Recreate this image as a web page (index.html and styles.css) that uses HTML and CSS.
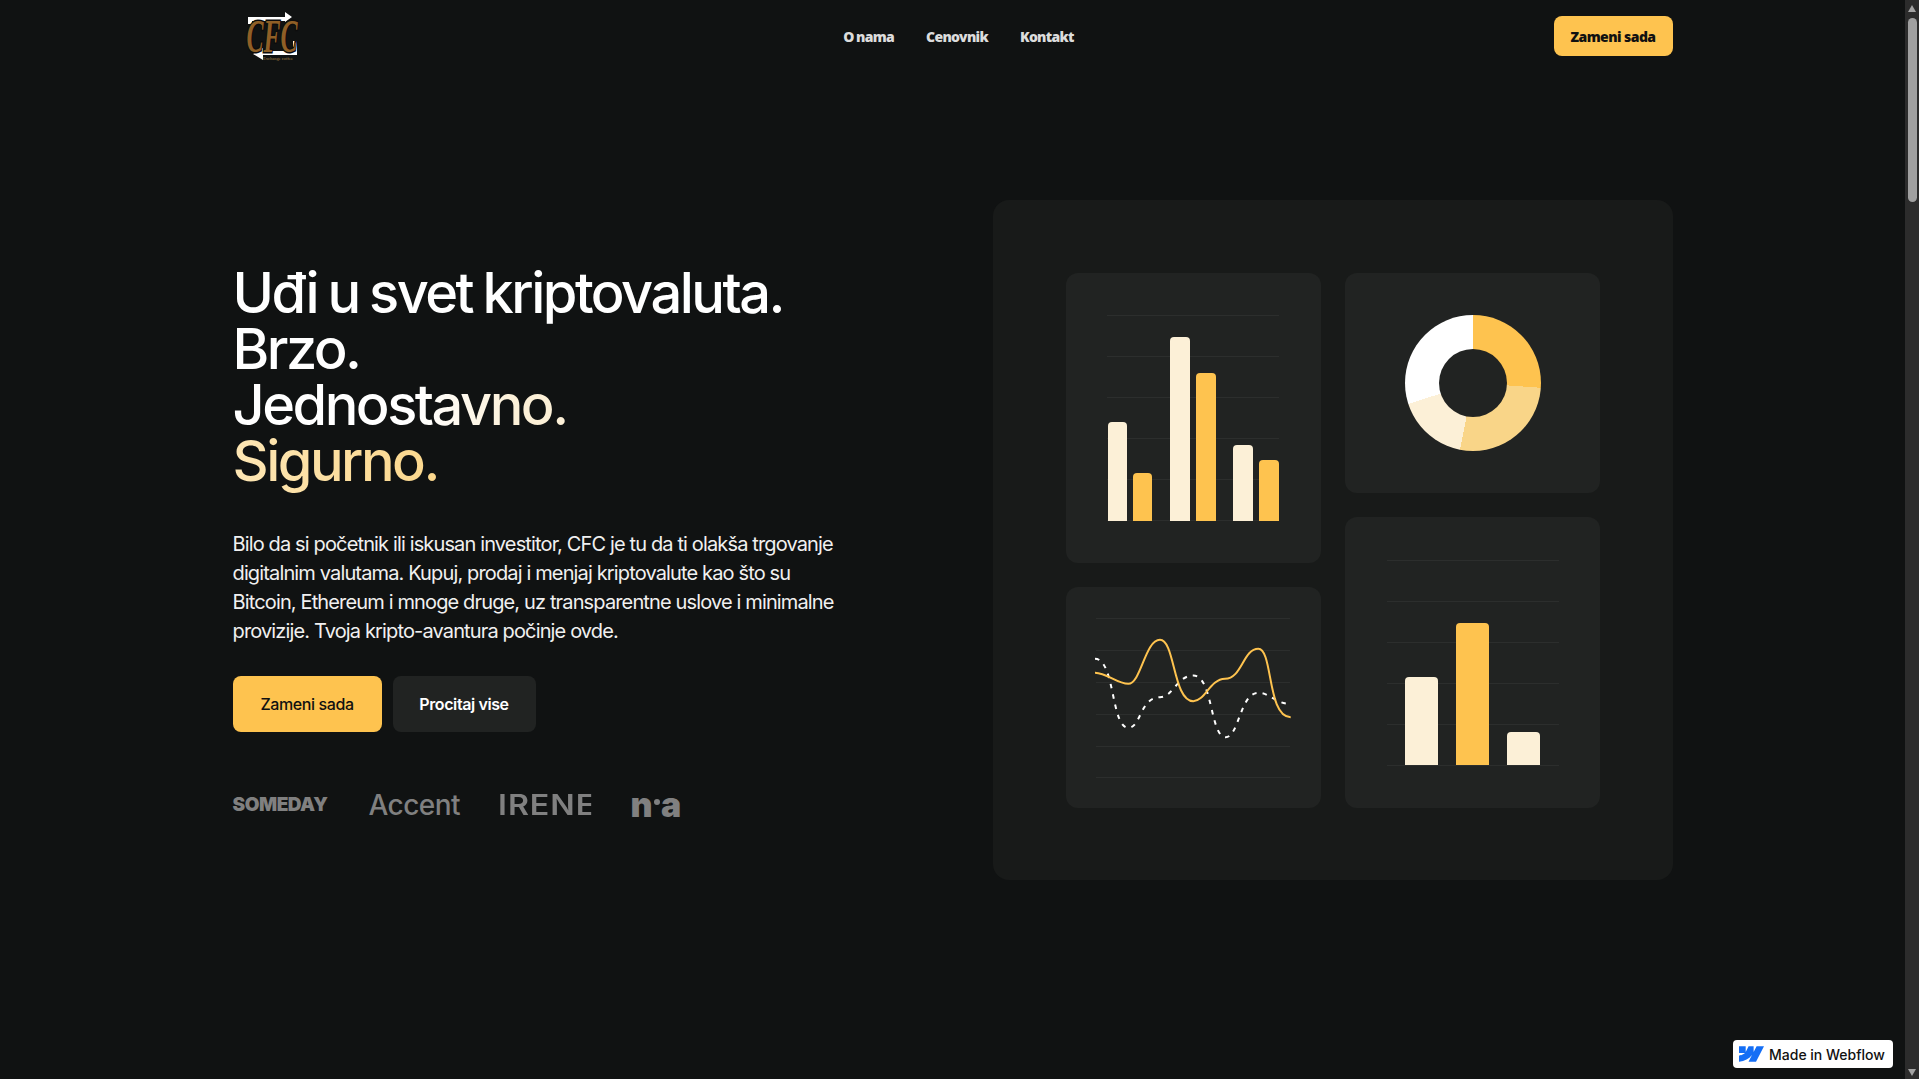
FILE: index.html
```html
<!DOCTYPE html>
<html lang="en">
<head>
  <meta charset="UTF-8">
  <meta name="viewport" content="width=device-width, initial-scale=1.0">
  <title>CFC - Zamena kriptovaluta</title>
  <link rel="stylesheet" href="styles.css">
</head>
<body>
  <div class="site">
    <header class="nav">
      <a class="brand" href="#">
        <svg class="brand-mark" viewBox="0 0 56 52" width="56" height="52">
          <polygon points="2,7 39,7 39,2 46,7 39,12 39,11 6,11 6,14 2,14" fill="#fff"/>
          <polygon points="51,31 51,45 17,45 17,50 7,44 17,38 17,41 47,41 47,31" fill="#fff"/>
          <text class="brand-text" x="26" y="42" text-anchor="middle" textLength="51" lengthAdjust="spacingAndGlyphs">CFC</text>
          <text class="brand-small" x="32" y="50" text-anchor="middle">Exchange coffee</text>
        </svg>
      </a>
      <nav class="nav-links">
        <a href="#">O nama</a>
        <a href="#">Cenovnik</a>
        <a href="#">Kontakt</a>
      </nav>
      <a class="nav-btn" href="#">Zameni sada</a>
    </header>

    <section class="hero">
      <div class="hero-text">
        <h1>Uđi u svet kriptovaluta.<br>Brzo.<br><span class="fade">Jednostavno.</span><br><span class="gold">Sigurno.</span></h1>
        <p>Bilo da si početnik ili iskusan investitor, CFC je tu da ti olakša trgovanje digitalnim valutama. Kupuj, prodaj i menjaj kriptovalute kao što su Bitcoin, Ethereum i mnoge druge, uz transparentne uslove i minimalne provizije. Tvoja kripto-avantura počinje ovde.</p>
        <div class="actions">
          <a class="btn btn-yellow" href="#">Zameni sada</a>
          <a class="btn btn-dark" href="#">Procitaj vise</a>
        </div>
        <div class="logos">
          <span class="logo-someday">SOMEDAY</span>
          <span class="logo-accent">Accent</span>
          <span class="logo-irene">IRENE</span>
          <span class="logo-na">n<i></i>a</span>
        </div>
      </div>

      <div class="panel">
        <div class="panel-col panel-col-left">
          <div class="card card-h290">
            <svg viewBox="0 0 172 206" width="172" height="206">
              <g class="grid">
                <path d="M0 .5H172M0 41.5H172M0 82.5H172M0 123.5H172M0 164.5H172M0 205.5H172"/>
              </g>
              <path class="cream" d="M1 206V111a4 4 0 0 1 4-4H16a4 4 0 0 1 4 4V206Z"/>
              <path class="yellow" d="M26 206V162a4 4 0 0 1 4-4H41a4 4 0 0 1 4 4V206Z"/>
              <path class="cream" d="M63 206V26a4 4 0 0 1 4-4H79a4 4 0 0 1 4 4V206Z"/>
              <path class="yellow" d="M89 206V62a4 4 0 0 1 4-4H105a4 4 0 0 1 4 4V206Z"/>
              <path class="cream" d="M126 206V134a4 4 0 0 1 4-4H142a4 4 0 0 1 4 4V206Z"/>
              <path class="yellow" d="M152 206V149a4 4 0 0 1 4-4H168a4 4 0 0 1 4 4V206Z"/>
            </svg>
          </div>
          <div class="card card-fill">
            <svg viewBox="0 0 196 160" width="196" height="160">
              <g class="grid">
                <path d="M1 .5H195M1 32.5H195M1 64.5H195M1 96.5H195M1 128.5H195M1 159.5H195"/>
              </g>
              <path class="line-white" d="M0 40.8C20 40.8 16 109.8 33.3 109.8C46 109.8 45 79.2 65 79.2C78 79.2 82 57.5 98.3 57.5C118 57.5 115 119.2 130.7 119.2C144 119.2 145 74.8 163.3 74.8C175 74.8 180 85.8 195.7 85.8"/>
              <path class="line-yellow" d="M0 54.8C12 55 22 65.8 33.3 65.8C46 65.8 50 21.8 65 21.8C80 21.8 78 83.2 98.3 83.2C110 83.2 115 61 130 60.8C147 60.8 148 30.8 163.3 30.8C178 30.8 172 99.2 195.7 99.2"/>
            </svg>
          </div>
        </div>
        <div class="panel-col">
          <div class="card card-h220">
            <div class="donut"></div>
          </div>
          <div class="card card-fill">
            <svg viewBox="0 0 172 206" width="172" height="206">
              <g class="grid">
                <path d="M0 .5H172M0 41.5H172M0 82.5H172M0 123.5H172M0 164.5H172M0 205.5H172"/>
              </g>
              <path class="cream" d="M18 205V121a4 4 0 0 1 4-4H47a4 4 0 0 1 4 4V205Z"/>
              <path class="yellow" d="M69 205V67a4 4 0 0 1 4-4H98a4 4 0 0 1 4 4V205Z"/>
              <path class="cream" d="M120 205V176a4 4 0 0 1 4-4H149a4 4 0 0 1 4 4V205Z"/>
            </svg>
          </div>
        </div>
      </div>
    </section>
  </div>

  <div class="scrollbar">
    <span class="arrow-up"></span>
    <span class="thumb"></span>
    <span class="arrow-down"></span>
  </div>

  <a class="badge" href="#">
    <svg viewBox="0 0 1080 674" width="25" height="16"><path fill="#146ef5" d="M1080 0L735.4 673.7H411.7L555.9 394.5H549.4C430.5 548.9 252.9 650.6 0 673.7V398.3C0 398.3 161.8 388.8 256.9 288.8H0V0H288.8V237.5L295.3 237.5L413.3 0H631.6V236L638.1 236L760.6 0H1080Z"/></svg>
    Made in Webflow
  </a>
</body>
</html>
```

FILE: styles.css
```css
* {
  box-sizing: border-box;
}
body {
  margin: 0;
  height: 100vh;
  overflow: hidden;
  display: flex;
  background: #101212;
  color: #fff;
  font-family: Inter, "Liberation Sans", sans-serif;
}
a {
  color: inherit;
  text-decoration: none;
}
.site {
  flex: 1;
  min-width: 0;
}

/* nav */
.nav {
  width: 1440px;
  margin: 0 auto;
  padding: 16px 0;
  display: flex;
  justify-content: space-between;
  align-items: center;
  height: 72px;
}
.brand {
  width: 131px;
  padding-left: 13px;
  display: flex;
}
.brand-text {
  font-family: "Liberation Serif", serif;
  font-style: italic;
  font-weight: 700;
  font-size: 46px;
  fill: #8f5f26;
  stroke: #0c0c0c;
  stroke-width: 3px;
  paint-order: stroke;
}
.brand-small {
  font-family: "Liberation Serif", serif;
  font-size: 4.5px;
  fill: #a98348;
}
.nav-links {
  display: flex;
  gap: 32px;
  font-family: "Noto Sans", sans-serif;
  font-weight: 900;
  font-size: 14px;
  letter-spacing: -0.05em;
  word-spacing: -0.5px;
  color: #dcdcdc;
}
.nav-btn {
  width: 119px;
  height: 40px;
  border-radius: 8px;
  background: #fec34f;
  color: #111;
  display: flex;
  align-items: center;
  justify-content: center;
  font-family: "Noto Sans", sans-serif;
  font-weight: 900;
  font-size: 14px;
  letter-spacing: -0.04em;
}

/* hero */
.hero {
  width: 1440px;
  margin: 0 auto;
  padding-top: 128px;
  display: flex;
  justify-content: space-between;
  align-items: center;
}
.hero-text {
  width: 620px;
}
h1 {
  margin: 0;
  font-size: 56px;
  line-height: 56px;
  font-weight: 500;
  letter-spacing: -0.045em;
  word-spacing: -2px;
}
.fade {
  background: linear-gradient(90deg, #fff 55%, #fcf0d7 85%);
  -webkit-background-clip: text;
  background-clip: text;
  color: transparent;
}
.gold {
  background: linear-gradient(90deg, #fde6b4, #fbd78c);
  -webkit-background-clip: text;
  background-clip: text;
  color: transparent;
}
.hero-text p {
  margin: 41px 0 0;
  max-width: 610px;
  font-size: 20px;
  line-height: 29px;
  letter-spacing: -0.043em;
  color: #f0f0f0;
}
.actions {
  margin-top: 30px;
  display: flex;
  gap: 11px;
}
.btn {
  height: 56px;
  border-radius: 8px;
  display: flex;
  align-items: center;
  justify-content: center;
  font-size: 16px;
  font-weight: 500;
  letter-spacing: -0.025em;
}
.btn-yellow {
  width: 149px;
  background: #fec34f;
  color: #111;
}
.btn-dark {
  width: 143px;
  background: #212322;
  font-weight: 600;
}
.logos {
  margin-top: 62px;
  display: flex;
  align-items: center;
  gap: 40px;
  height: 22px;
  color: #808080;
}
.logo-someday {
  width: 96px;
  font-size: 19px;
  font-weight: 900;
  letter-spacing: -0.025em;
  white-space: nowrap;
}
.logo-accent {
  width: 89px;
  font-size: 28px;
  font-weight: 500;
  letter-spacing: -0.02em;
}
.logo-irene {
  width: 81px;
  margin-right: 12px;
  overflow: hidden;
  font-size: 28px;
  font-weight: 600;
  letter-spacing: 0.03em;
  transform: scaleX(1.15);
  transform-origin: left center;
}
.logo-na {
  display: flex;
  align-items: center;
  font-size: 34px;
  font-weight: 900;
  letter-spacing: -0.02em;
}
.logo-na i {
  width: 6px;
  height: 6px;
  margin: 0 1px 5px 2px;
  border-radius: 50%;
  background: #808080;
}

/* chart panel */
.panel {
  width: 680px;
  height: 680px;
  padding: 73px 72.5px 72px 73.5px;
  background: #181a19;
  border-radius: 16px;
  display: flex;
  gap: 24px;
}
.panel-col {
  flex: 1;
  display: flex;
  flex-direction: column;
  gap: 24px;
}
.panel-col-left svg {
  margin-right: 1px;
}
.card {
  background: #212322;
  border-radius: 12px;
  display: flex;
  align-items: center;
  justify-content: center;
}
.card-h290 {
  height: 290px;
}
.card-h220 {
  height: 220px;
}
.card-fill {
  flex: 1;
}
.grid path {
  fill: none;
  stroke: #2c2e2d;
  stroke-width: 1;
}
.cream {
  fill: #fcf0d7;
}
.yellow {
  fill: #fec34f;
}
.line-white {
  fill: none;
  stroke: #fff;
  stroke-width: 2;
  stroke-dasharray: 4.5 6;
}
.line-yellow {
  fill: none;
  stroke: #fec34f;
  stroke-width: 2;
}
.donut {
  width: 136px;
  height: 136px;
  border-radius: 50%;
  background: conic-gradient(#fec34f 0 94deg, #f9d588 94deg 191deg, #fcf0d7 191deg 252deg, #fff 252deg);
  display: flex;
  align-items: center;
  justify-content: center;
}
.donut::after {
  content: "";
  width: 68px;
  height: 68px;
  border-radius: 50%;
  background: #212322;
}

/* fake browser scrollbar */
.scrollbar {
  width: 14px;
  height: 100%;
  background: #2c2c2c;
  display: flex;
  flex-direction: column;
  align-items: center;
  padding: 5px 0 3px;
}
.arrow-up,
.arrow-down {
  width: 0;
  height: 0;
  border-left: 4.5px solid transparent;
  border-right: 4.5px solid transparent;
}
.arrow-up {
  border-bottom: 7px solid #a3a3a3;
}
.arrow-down {
  border-top: 7px solid #a3a3a3;
  margin-top: auto;
}
.thumb {
  width: 9px;
  height: 184px;
  margin-top: 6px;
  border-radius: 5px;
  background: #a0a0a0;
}

/* webflow badge */
.badge {
  position: fixed;
  left: 1733px;
  top: 1040px;
  width: 160px;
  height: 28px;
  background: #fff;
  color: #111;
  border-radius: 4px;
  display: flex;
  align-items: center;
  gap: 5px;
  padding-left: 6px;
  font-size: 14px;
  font-weight: 500;
}
```
